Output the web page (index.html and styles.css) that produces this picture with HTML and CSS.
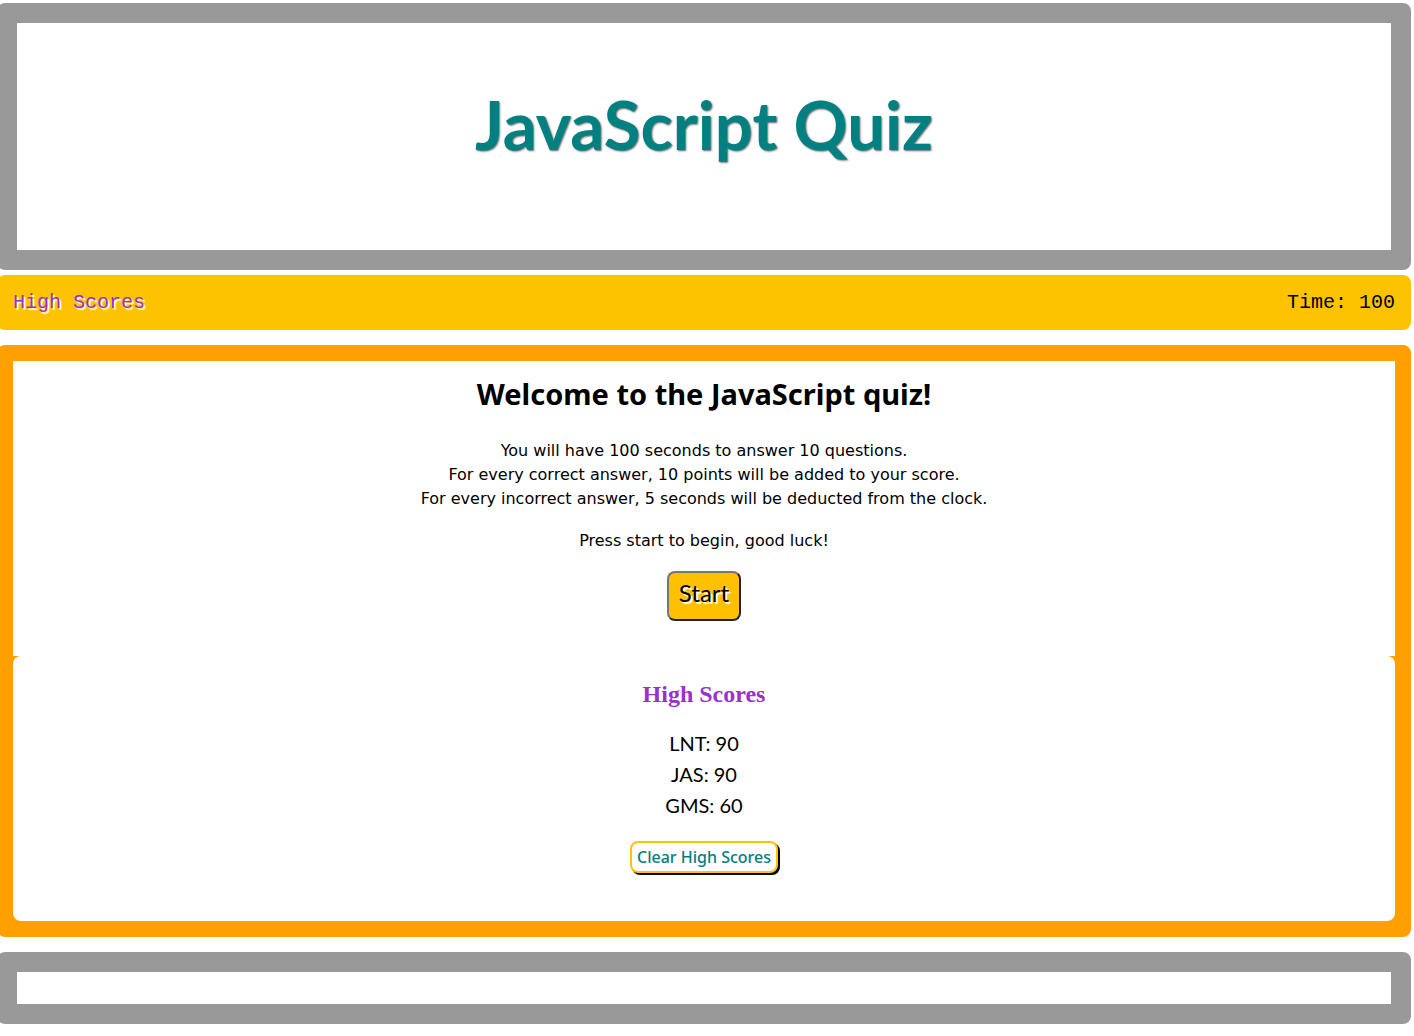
FILE: index.html
```html
<!DOCTYPE html>
<html lang="en">
<head>
  <meta charset="utf-8">
  <meta name="viewport" content="width=device-width, initial-scale=1">
  <title>JavaScript Quiz</title>
  <link rel="stylesheet" href="styles.css">
</head>
<body>
  <header class="banner">
    <h1 class="banner-title">JavaScript Quiz</h1>
  </header>
  <nav class="status-bar">
    <a class="scores-link" href="#high-scores">High Scores</a>
    <span class="timer">Time: 100</span>
  </nav>
  <main class="quiz">
    <section class="intro">
      <h2 class="intro-title">Welcome to the JavaScript quiz!</h2>
      <p class="intro-text">You will have 100 seconds to answer 10 questions.<br>For every correct answer, 10 points will be added to your score.<br>For every incorrect answer, 5 seconds will be deducted from the clock.</p>
      <p class="intro-text">Press start to begin, good luck!</p>
      <button class="start-button" type="button">Start</button>
    </section>
    <section class="scores" id="high-scores">
      <h2 class="scores-title">High Scores</h2>
      <ul class="scores-list">
        <li>LNT: 90</li>
        <li>JAS: 90</li>
        <li>GMS: 60</li>
      </ul>
      <button class="clear-button" type="button">Clear High Scores</button>
    </section>
  </main>
  <footer class="page-footer"></footer>
</body>
</html>
```
FILE: styles.css
```css
* {
  box-sizing: border-box;
}

body {
  margin: 3px 3px 12px -3px;
  background: #fff;
  color: #000;
  font-family: Verdana, "DejaVu Sans", sans-serif;
  font-size: 16px;
}

h1,
h2,
p,
ul {
  margin: 0;
  padding: 0;
}

.banner {
  padding: 57px 16px 82px;
  border: 20px solid #999;
  border-radius: 8px;
  text-align: center;
}

.banner-title {
  color: teal;
  font: 700 67px/88px Papyrus, Lato, sans-serif;
  text-shadow: 1px 1px 2px #666;
}

.status-bar {
  display: flex;
  justify-content: space-between;
  align-items: center;
  height: 55px;
  margin-top: 5px;
  padding: 0 16px;
  border-radius: 8px;
  background: #fdc300;
  font: 20px/24px Courier, "Liberation Mono", monospace;
}

.scores-link {
  color: darkorchid;
  text-decoration: none;
  text-shadow: 2px 2px 1px #fff;
}

.quiz {
  margin-top: 15px;
  border: 16px solid #ffa000;
  border-radius: 8px;
  background: #ffa000;
  text-align: center;
}

.intro {
  padding: 12px 16px 35px;
  background: #fff;
}

.intro-title {
  margin-bottom: 24px;
  font: 700 29px/42px "Lucida Grande", "Noto Sans", sans-serif;
}

.intro-text {
  margin-bottom: 18px;
  line-height: 24px;
}

.start-button {
  height: 50px;
  padding: 0 10px 6px;
  border: 2px solid;
  border-color: #767676 #212121 #212121 #767676;
  border-radius: 8px;
  background: #ffc000;
  color: #000;
  font: 24px/28px Papyrus, Lato, sans-serif;
  text-shadow: 2px 2px 1px #fff;
  vertical-align: top;
}

.scores {
  padding: 24px 16px 48px;
  border-radius: 8px;
  background: #fff;
}

.scores-title {
  margin-bottom: 20px;
  color: darkorchid;
  font: 700 24px/28px "Liberation Serif", serif;
}

.scores-list {
  margin-bottom: 20px;
  list-style: none;
  font: 20px/31px Papyrus, Lato, sans-serif;
}

.clear-button {
  height: 32px;
  padding: 0 5px;
  border: 2px solid #fdc300;
  border-radius: 8px;
  background: #fff;
  box-shadow: 2px 2px #000;
  color: teal;
  font: 500 16px/24px "Lucida Grande", "Noto Sans", sans-serif;
  vertical-align: top;
}

.page-footer {
  height: 72px;
  margin-top: 15px;
  border: 20px solid #999;
  border-radius: 8px;
}
```
